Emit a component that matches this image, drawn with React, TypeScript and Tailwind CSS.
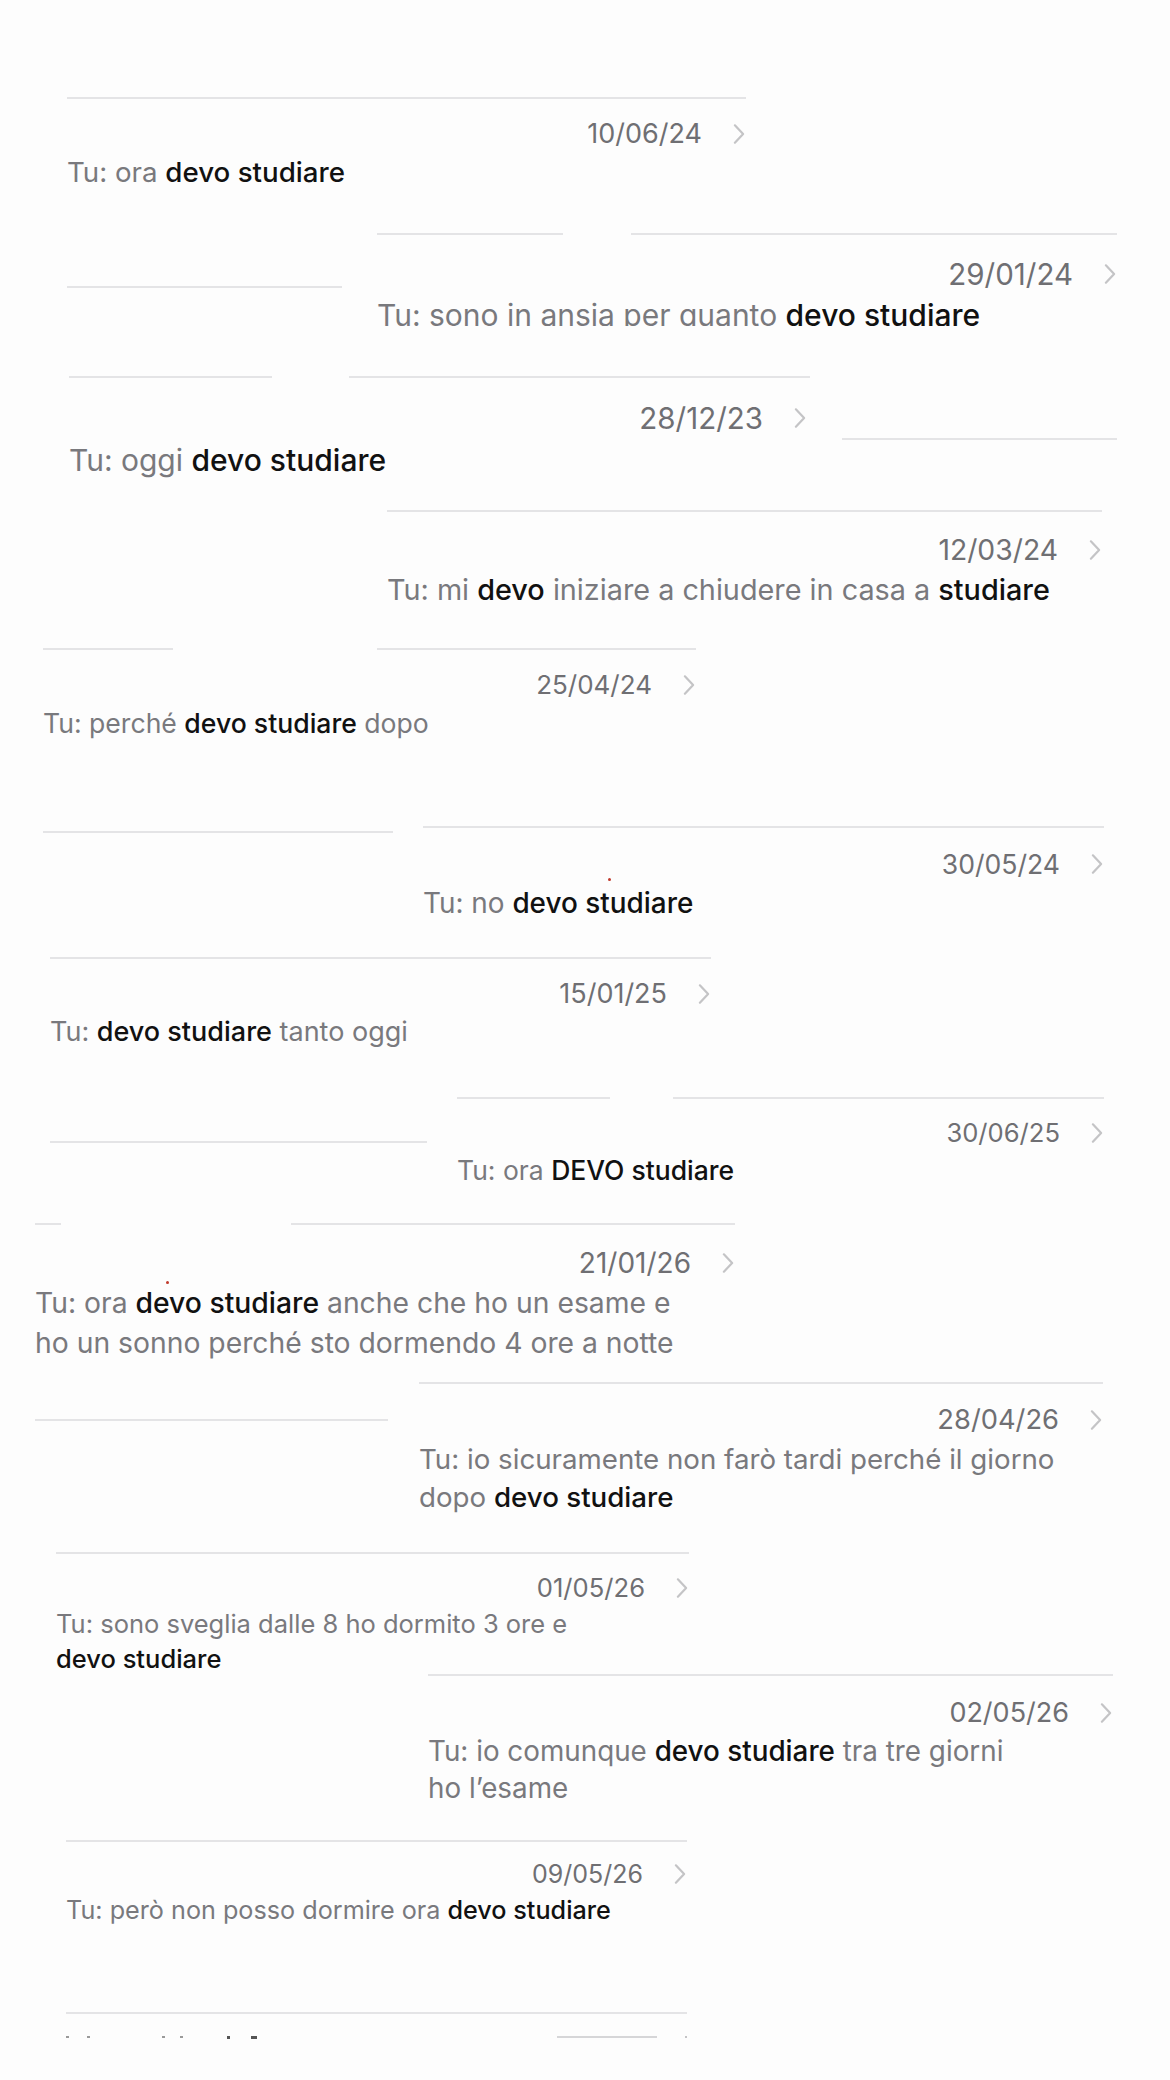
import React from "react";

type Seg = [string, boolean?];

type Block = {
  box: string; // margin-left + width of the result block
  lines: string[]; // separator segments on top of the block
  date: string;
  dateCls: string;
  textCls: string;
  text: Seg[][]; // one array per visual line
  clip?: string;
  dot?: string;
};

type Row = {
  h: string;
  before?: string; // stray separator on the left
  block: Block;
  after?: string; // stray separator on the right
};

const ROWS: Row[] = [
  {
    h: "h-[136px]",
    block: {
      box: "ml-[67px] w-[679px]",
      lines: ["w-[679px]"],
      date: "10/06/24",
      dateCls: "mt-[19px] text-[27px]",
      textCls: "mt-[4px] text-[27.7px] leading-[36px]",
      text: [[["Tu: "], ["ora "], ["devo studiare", true]]],
    },
  },
  {
    h: "h-[143px]",
    before: "ml-[67px] w-[275px] mt-[53px]",
    block: {
      box: "ml-[35px] w-[740px]",
      lines: ["w-[186px]", "ml-[68px] w-[486px]"],
      date: "29/01/24",
      dateCls: "mt-[23px] text-[29.5px]",
      textCls: "mt-[7px] text-[30px] leading-[36px]",
      text: [[["Tu: "], ["sono in ansia per quanto "], ["devo studiare", true]]],
      clip: "h-[93px] overflow-hidden",
    },
  },
  {
    h: "h-[134px]",
    block: {
      box: "ml-[69px] w-[741px]",
      lines: ["w-[203px]", "ml-[77px] w-[461px]"],
      date: "28/12/23",
      dateCls: "mt-[24px] text-[29.5px] pr-[3px]",
      textCls: "mt-[8px] text-[30px] leading-[36px]",
      text: [[["Tu: "], ["oggi "], ["devo studiare", true]]],
    },
    after: "ml-[32px] w-[275px] mt-[62px]",
  },
  {
    h: "h-[138px]",
    block: {
      box: "ml-[387px] w-[715px]",
      lines: ["w-[715px]"],
      date: "12/03/24",
      dateCls: "mt-[22px] text-[28.3px]",
      textCls: "mt-[6px] text-[28.8px] leading-[36px]",
      text: [[["Tu: "], ["mi "], ["devo", true], [" iniziare a chiudere in casa a "], ["studiare", true]]],
    },
  },
  {
    h: "h-[178px]",
    block: {
      box: "ml-[43px] w-[653px]",
      lines: ["w-[130px]", "ml-[204px] w-[319px]"],
      date: "25/04/24",
      dateCls: "mt-[19px] text-[26px]",
      textCls: "mt-[4px] text-[26.6px] leading-[36px]",
      text: [[["Tu: "], ["perché "], ["devo studiare", true], [" dopo"]]],
    },
  },
  {
    h: "h-[131px]",
    before: "ml-[43px] w-[350px] mt-[5px]",
    block: {
      box: "ml-[30px] w-[681px]",
      lines: ["w-[681px]"],
      date: "30/05/24",
      dateCls: "mt-[20px] text-[26.6px]",
      textCls: "mt-[5px] text-[27.9px] leading-[36px]",
      text: [[["Tu: "], ["no "], ["devo studiare", true]]],
      dot: "ml-[185px] mt-[30px] bg-[#c0392b]",
    },
  },
  {
    h: "h-[140px]",
    block: {
      box: "ml-[50px] w-[661px]",
      lines: ["w-[661px]"],
      date: "15/01/25",
      dateCls: "mt-[19px] text-[27px]",
      textCls: "mt-[4px] text-[27px] leading-[36px]",
      text: [[["Tu: "], ["devo studiare", true], [" tanto oggi"]]],
    },
  },
  {
    h: "h-[126px]",
    before: "ml-[50px] w-[377px] mt-[44px]",
    block: {
      box: "ml-[30px] w-[647px]",
      lines: ["w-[153px]", "ml-[63px] w-[431px]"],
      date: "30/06/25",
      dateCls: "mt-[18px] text-[25.6px]",
      textCls: "mt-[3px] text-[26.5px] leading-[36px]",
      text: [[["Tu: "], ["ora "], ["DEVO studiare", true]]],
    },
  },
  {
    h: "h-[159px]",
    block: {
      box: "ml-[35px] w-[700px]",
      lines: ["w-[26px]", "ml-[230px] w-[444px]"],
      date: "21/01/26",
      dateCls: "mt-[22px] text-[28px]",
      textCls: "mt-[4px] text-[28.3px] leading-[40px]",
      text: [
        [["Tu: "], ["ora "], ["devo studiare", true], [" anche che ho un esame e"]],
        [["ho un sonno perché sto dormendo 4 ore a notte"]],
      ],
      dot: "ml-[131px] mt-[34px] bg-[#c0392b]",
    },
  },
  {
    h: "h-[170px]",
    before: "ml-[35px] w-[353px] mt-[37px]",
    block: {
      box: "ml-[31px] w-[684px]",
      lines: ["w-[684px]"],
      date: "28/04/26",
      dateCls: "mt-[20px] text-[27.3px]",
      textCls: "mt-[4px] text-[27.7px] leading-[38px]",
      text: [
        [["Tu: "], ["io sicuramente non farò tardi perché il giorno"]],
        [["dopo "], ["devo studiare", true]],
      ],
    },
  },
  {
    h: "h-[122px]",
    block: {
      box: "ml-[56px] w-[633px]",
      lines: ["w-[633px]"],
      date: "01/05/26",
      dateCls: "mt-[18px] text-[25.6px]",
      textCls: "mt-[2px] text-[25.5px] leading-[35px]",
      text: [
        [["Tu: "], ["sono sveglia dalle 8 ho dormito 3 ore e"]],
        [["devo studiare", true]],
      ],
    },
  },
  {
    h: "h-[166px]",
    block: {
      box: "ml-[428px] w-[685px]",
      lines: ["w-[685px]"],
      date: "02/05/26",
      dateCls: "mt-[21px] text-[27px]",
      textCls: "mt-[4px] text-[27.8px] leading-[37px]",
      text: [
        [["Tu: "], ["io comunque "], ["devo studiare", true], [" tra tre giorni"]],
        [["ho l’esame"]],
      ],
    },
  },
  {
    h: "h-[172px]",
    block: {
      box: "ml-[66px] w-[621px]",
      lines: ["w-[621px]"],
      date: "09/05/26",
      dateCls: "mt-[16px] text-[25px]",
      textCls: "mt-[2px] text-[25.2px] leading-[36px]",
      text: [[["Tu: "], ["però non posso dormire ora "], ["devo studiare", true]]],
    },
  },
];

function Chevron() {
  return (
    <svg viewBox="0 0 14 24" className="w-[14px] h-[22px] shrink-0" fill="none">
      <path d="M2.5 2.5 L11.5 12 L2.5 21.5" stroke="#c4c4c6" strokeWidth="2.4" strokeLinecap="round" strokeLinejoin="round" />
    </svg>
  );
}

function Result({ b }: { b: Block }) {
  return (
    <div className={`${b.box} flex flex-col shrink-0 ${b.clip ?? ""}`}>
      <div className="flex">
        {b.lines.map((l, i) => (
          <div key={i} className={`${l} h-[2px] bg-[#e4e4e6]`} />
        ))}
      </div>
      <div className={`${b.dateCls} flex h-[32px] items-center leading-[32px]`}>
        {b.dot && <span className={`${b.dot} w-[3px] h-[3px] rounded-full self-start`} />}
        <span className="ml-auto text-[#6f6f73]">{b.date}</span>
        <span className="ml-[30px]">
          <Chevron />
        </span>
      </div>
      <div className={`${b.textCls} text-[#79797d]`}>
        {b.text.map((line, i) => (
          <div key={i} className="whitespace-nowrap">
            {line.map(([t, hi], j) =>
              hi ? (
                <span key={j} className="text-[#111111] font-medium">
                  {t}
                </span>
              ) : (
                <span key={j}>{t}</span>
              )
            )}
          </div>
        ))}
      </div>
    </div>
  );
}

export default function App() {
  return (
    <div className="w-[1170px] h-[2080px] overflow-hidden bg-[#fdfdfd] pt-[97px] font-['Inter','Noto_Sans',sans-serif]">
      {ROWS.map((r, i) => (
        <div key={i} className={`${r.h} flex items-start`}>
          {r.before && <div className={`${r.before} h-[2px] bg-[#e4e4e6] shrink-0`} />}
          <Result b={r.block} />
          {r.after && <div className={`${r.after} h-[2px] bg-[#e4e4e6] shrink-0`} />}
        </div>
      ))}

      {/* last result, cut off by the bottom of the screenshot */}
      <div className="ml-[66px] w-[621px]">
        <div className="h-[2px] bg-[#e4e4e6]" />
        <div className="mt-[22px] flex items-start h-[3px]">
          <span className="w-[3px] h-[2px] bg-[#9a9a9a]" />
          <span className="ml-[18px] w-[3px] h-[2px] bg-[#9a9a9a]" />
          <span className="ml-[72px] w-[3px] h-[2px] bg-[#9a9a9a]" />
          <span className="ml-[15px] w-[3px] h-[2px] bg-[#9a9a9a]" />
          <span className="ml-[44px] w-[3px] h-[3px] bg-[#555555]" />
          <span className="ml-[21px] w-[6px] h-[3px] bg-[#555555]" />
          <span className="ml-auto w-[100px] h-[2px] bg-[#d6d6d8]" />
          <span className="ml-[28px] w-[2px] h-[2px] bg-[#c4c4c6]" />
        </div>
      </div>
    </div>
  );
}
